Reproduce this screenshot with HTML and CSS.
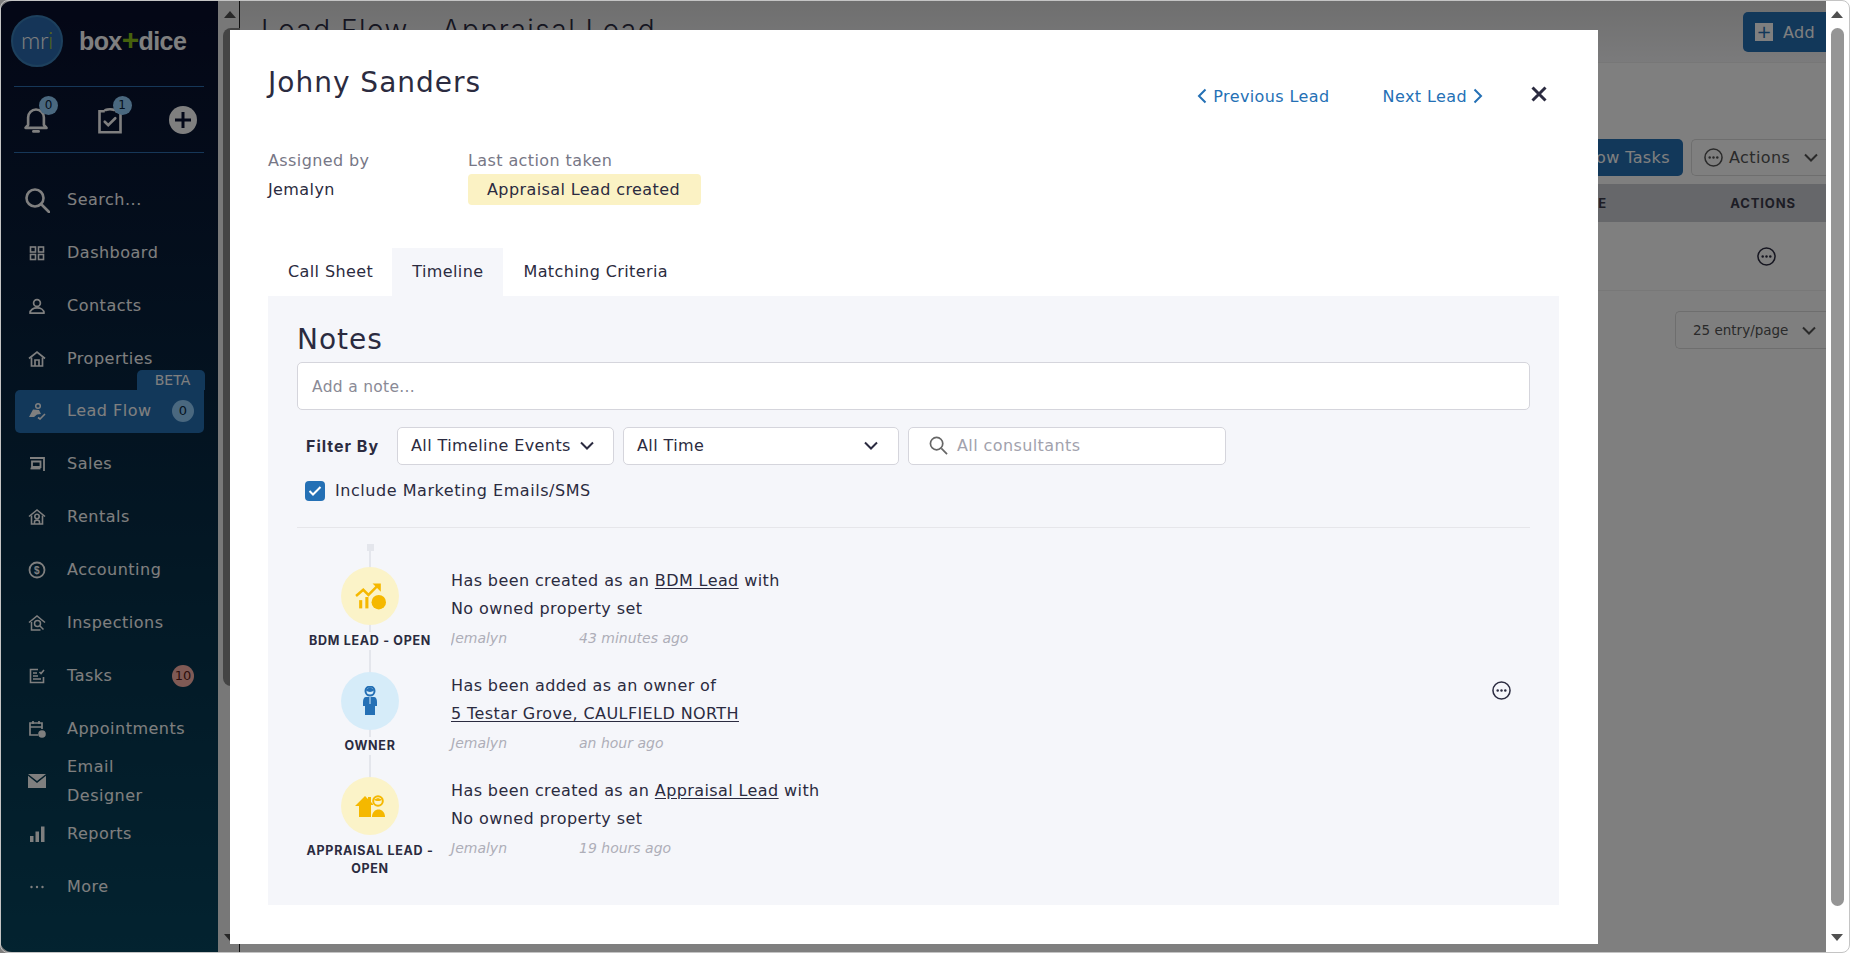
FILE: index.html
```html
<!DOCTYPE html>
<html lang="en">
<head>
<meta charset="utf-8">
<title>Lead Flow - Appraisal Lead</title>
<link rel="stylesheet" href="styles.css">
</head>
<body>
<div class="app">
  <aside class="sidebar">
    <div class="brand">
      <div class="brand-mark"><span class="mr">mr</span><span class="mi">i</span></div>
      <div class="brand-name">box<span class="plus">+</span>dice</div>
    </div>
    <div class="quick">
      <div class="quick-item">
        <svg class="qi" viewBox="0 0 32 32" fill="none" stroke="currentColor" stroke-width="3"><path d="M4 25h24l-3-3.500V13a9 9 0 0 0-18 0v8.500z" stroke-linejoin="round"/><path d="M13 29h6" stroke-linecap="round"/></svg>
        <span class="qbadge">0</span>
      </div>
      <div class="quick-item">
        <svg class="qi" viewBox="0 0 32 32" fill="none" stroke="currentColor" stroke-width="3"><path d="M10 6H4v24h24V6h-6"/><path d="M10 6c0-3 12-3 12 0"/><path d="M10 18l4 4 8-8" stroke-linecap="round"/></svg>
        <span class="qbadge">1</span>
      </div>
      <div class="quick-item">
        <svg class="qplus" viewBox="0 0 28 28"><circle cx="14" cy="14" r="14" fill="currentColor"/><path d="M14 6v16M6 14h16" stroke="#081030" stroke-width="3"/></svg>
      </div>
    </div>
    <nav class="nav">
      <a class="nav-item search"><svg class="nav-icon big" viewBox="0 0 26 26" fill="none" stroke="currentColor" stroke-width="2.600"><circle cx="11" cy="11" r="8.500"/><path d="M17 17l8 8" stroke-linecap="round"/></svg><span>Search...</span></a>
      <a class="nav-item"><svg class="nav-icon small" viewBox="0 0 16 16" fill="none" stroke="currentColor" stroke-width="1.600"><rect x="1.500" y="2" width="5" height="5"/><rect x="9.500" y="2" width="5" height="5"/><rect x="1.500" y="9.500" width="5" height="5"/><rect x="9.500" y="9.500" width="5" height="5"/></svg><span>Dashboard</span></a>
      <a class="nav-item"><svg class="nav-icon small" viewBox="0 0 16 16" fill="none" stroke="currentColor" stroke-width="1.700"><circle cx="8" cy="5" r="3.400"/><path d="M1 15.200c0-7 14-7 14 0z" stroke-linejoin="round"/></svg><span>Contacts</span></a>
      <a class="nav-item"><svg class="nav-icon" viewBox="0 0 18 18" fill="none" stroke="currentColor" stroke-width="1.700"><path d="M1 8.500L9 2l8 6.500"/><path d="M3.500 7.500V16h11V7.500"/><path d="M7 16v-6h4v6"/></svg><span>Properties</span></a>
      <div class="lead-wrap">
        <span class="beta">BETA</span>
        <a class="nav-item active"><svg class="nav-icon" viewBox="0 0 18 18" fill="currentColor"><circle cx="10" cy="4" r="2.300" fill="none" stroke="currentColor" stroke-width="1.500"/><path d="M5 7.500l6 .5 2 4-4 .5L6 15H1z"/><path d="M10 15.500l2 1.500 5-5" fill="none" stroke="currentColor" stroke-width="1.600"/></svg><span>Lead Flow</span><b class="count">0</b></a>
      </div>
      <a class="nav-item"><svg class="nav-icon small" viewBox="0 0 16 16" fill="none" stroke="currentColor" stroke-width="1.800"><path d="M1 2h14v13"/><path d="M3 5.500h8.500V11H3z"/><path d="M1.500 12.500h10"/></svg><span>Sales</span></a>
      <a class="nav-item"><svg class="nav-icon" viewBox="0 0 18 18" fill="none" stroke="currentColor" stroke-width="1.600"><path d="M1 8.500L9 2l8 6.500"/><path d="M3.500 7.500V16h11V7.500"/><circle cx="9" cy="8.500" r="2.200"/><path d="M6.500 16v-2c0-2.500 5-2.500 5 0v2"/></svg><span>Rentals</span></a>
      <a class="nav-item"><svg class="nav-icon" viewBox="0 0 18 18" fill="none"><circle cx="9" cy="9" r="7.500" stroke="currentColor" stroke-width="1.800"/><text x="9" y="12.500" class="dollar" text-anchor="middle">$</text></svg><span>Accounting</span></a>
      <a class="nav-item"><svg class="nav-icon" viewBox="0 0 18 18" fill="none" stroke="currentColor" stroke-width="1.500"><path d="M1 8.500L9 2l8 6.500"/><path d="M3.500 8V16h9"/><circle cx="9.500" cy="9.500" r="3"/><path d="M12 12l3.500 3.500"/></svg><span>Inspections</span></a>
      <a class="nav-item"><svg class="nav-icon small" viewBox="0 0 16 16" fill="none" stroke="currentColor" stroke-width="1.600"><path d="M9 1.500H1.500v13h13V9"/><path d="M4 5h4M4 8h5M4 11h8"/><path d="M10.500 4l1.500 1.500L15 2"/></svg><span>Tasks</span><b class="count alert">10</b></a>
      <a class="nav-item"><svg class="nav-icon" viewBox="0 0 18 18" fill="none" stroke="currentColor" stroke-width="1.700"><path d="M10 15H2V3h12v6"/><path d="M5 1v3M11 1v3M2 7h12"/><circle cx="14" cy="14" r="3.800" fill="currentColor" stroke="none"/></svg><span>Appointments</span></a>
      <a class="nav-item two-line"><svg class="nav-icon" viewBox="0 0 18 14"><path d="M0 0h18L9 7z" fill="currentColor"/><path d="M0 1.800V14h18V1.800L9 9z" fill="currentColor"/></svg><span>Email Designer</span></a>
      <a class="nav-item"><svg class="nav-icon small" viewBox="0 0 16 16" fill="currentColor"><rect x="1" y="10" width="3.500" height="6"/><rect x="6.500" y="5.500" width="3.500" height="10.500"/><rect x="12" y="0.500" width="3.500" height="15.500"/></svg><span>Reports</span></a>
      <a class="nav-item"><svg class="nav-icon small" viewBox="0 0 16 16" fill="currentColor"><circle cx="2.500" cy="8" r="1.200"/><circle cx="8" cy="8" r="1.200"/><circle cx="13.500" cy="8" r="1.200"/></svg><span>More</span></a>
    </nav>
  </aside>

  <div class="inner-scroll"><span class="arrow up"></span><span class="inner-thumb"></span><span class="arrow down"></span></div>

  <main class="main">
    <header class="main-head">
      <h1>Lead Flow - Appraisal Lead</h1>
      <button class="btn add"><span class="add-plus">+</span>Add</button>
    </header>
    <div class="toolbar">
      <button class="btn flow">Show Tasks</button>
      <button class="btn ghost"><svg class="dots" viewBox="0 0 20 20"><circle cx="10" cy="10" r="9" fill="none" stroke="currentColor" stroke-width="1.600"/><circle cx="6" cy="10" r="1.300" fill="currentColor"/><circle cx="10" cy="10" r="1.300" fill="currentColor"/><circle cx="14" cy="10" r="1.300" fill="currentColor"/></svg>Actions<svg class="chev" viewBox="0 0 14 8" fill="none" stroke="currentColor" stroke-width="2"><path d="M1 1l6 6 6-6"/></svg></button>
    </div>
    <div class="table-head"><span>DATE</span><span>ACTIONS</span></div>
    <div class="table-row"><svg class="dots row-dots" viewBox="0 0 20 20"><circle cx="10" cy="10" r="9" fill="none" stroke="currentColor" stroke-width="1.600"/><circle cx="6" cy="10" r="1.300" fill="currentColor"/><circle cx="10" cy="10" r="1.300" fill="currentColor"/><circle cx="14" cy="10" r="1.300" fill="currentColor"/></svg></div>
    <div class="pager"><button class="btn ghost per-page">25 entry/page<svg class="chev" viewBox="0 0 14 8" fill="none" stroke="currentColor" stroke-width="2"><path d="M1 1l6 6 6-6"/></svg></button></div>
  </main>
</div>

<div class="page-scroll"><span class="arrow up dark"></span><span class="page-thumb"></span><span class="arrow down dark"></span></div>
<div class="dim"></div>

<section class="modal">
  <div class="modal-top">
    <h2>Johny Sanders</h2>
    <div class="lead-nav">
      <a class="lead-link"><svg class="pn" viewBox="0 0 10 16" fill="none" stroke="currentColor" stroke-width="2"><path d="M8.500 1.500L2 8l6.500 6.500"/></svg>Previous Lead</a>
      <a class="lead-link next">Next Lead<svg class="pn" viewBox="0 0 10 16" fill="none" stroke="currentColor" stroke-width="2"><path d="M1.500 1.500L8 8l-6.500 6.500"/></svg></a>
      <svg class="close" viewBox="0 0 16 16" fill="none" stroke="currentColor" stroke-width="3"><path d="M1.500 1.500l13 13M14.500 1.500l-13 13"/></svg>
    </div>
  </div>
  <div class="meta-row">
    <div class="meta-assigned"><div class="meta-label">Assigned by</div><div class="meta-value">Jemalyn</div></div>
    <div><div class="meta-label">Last action taken</div><div class="tag">Appraisal Lead created</div></div>
  </div>
  <div class="tabs">
    <a class="tab first">Call Sheet</a>
    <a class="tab current">Timeline</a>
    <a class="tab">Matching Criteria</a>
  </div>
  <div class="panel">
    <h3>Notes</h3>
    <div class="note-input">Add a note...</div>
    <div class="filters">
      <strong class="filter-label">Filter By</strong>
      <div class="field events">All Timeline Events<svg class="chev" viewBox="0 0 14 8" fill="none" stroke="currentColor" stroke-width="2"><path d="M1 1l6 6 6-6"/></svg></div>
      <div class="field period">All Time<svg class="chev" viewBox="0 0 14 8" fill="none" stroke="currentColor" stroke-width="2"><path d="M1 1l6 6 6-6"/></svg></div>
      <div class="field people"><svg class="mag" viewBox="0 0 20 20" fill="none" stroke="currentColor" stroke-width="1.800"><circle cx="8" cy="8" r="6.500"/><path d="M13 13l6 6"/></svg><span>All consultants</span></div>
    </div>
    <label class="check-row"><span class="check"><svg viewBox="0 0 14 12" fill="none" stroke="#fff" stroke-width="2"><path d="M1.500 6l3.500 3.500L12.500 2"/></svg></span>Include Marketing Emails/SMS</label>
    <div class="timeline">
      <span class="tl-cap"></span>
      <article class="event">
        <div class="event-side">
          <div class="badge yellow"><svg class="ic-bdm" viewBox="0 0 30 26" fill="#f5b800"><path d="M1 13l7-6 5 5 8-8" fill="none" stroke="#f5b800" stroke-width="2.400"/><path d="M17 1h8v8z"/><rect x="4" y="17" width="3" height="8"/><rect x="10" y="14" width="3" height="11"/><circle cx="23" cy="19" r="7"/></svg></div>
          <div class="event-type">BDM LEAD - OPEN</div>
        </div>
        <div class="event-body">
          <p>Has been created as an <u>BDM Lead</u> with</p>
          <p>No owned property set</p>
          <div class="event-meta"><span class="who"><span class="clip">Jemalyn</span></span><span class="when">43 minutes ago</span></div>
        </div>
      </article>
      <article class="event">
        <div class="event-side">
          <div class="badge blue"><svg class="ic-owner" viewBox="0 0 16 30" fill="#2470b5"><circle cx="8" cy="5" r="4.500" fill="none" stroke="#2470b5" stroke-width="2"/><path d="M3.500 4c3 2.500 6 2.500 9 0L8 1z"/><path d="M4 11h8c2 0 3 2 3 5v4h-2v9H3v-9H1v-4c0-3 1-5 3-5z"/><path d="M7.500 11h1v7h-1z" fill="#d6ecf9"/></svg></div>
          <div class="event-type">OWNER</div>
        </div>
        <div class="event-body">
          <p>Has been added as an owner of</p>
          <p><u>5 Testar Grove, CAULFIELD NORTH</u></p>
          <div class="event-meta"><span class="who">Jemalyn</span><span class="when">an hour ago</span></div>
        </div>
        <svg class="dots event-dots" viewBox="0 0 20 20"><circle cx="10" cy="10" r="9" fill="none" stroke="currentColor" stroke-width="1.600"/><circle cx="6" cy="10" r="1.300" fill="currentColor"/><circle cx="10" cy="10" r="1.300" fill="currentColor"/><circle cx="14" cy="10" r="1.300" fill="currentColor"/></svg>
      </article>
      <article class="event">
        <div class="event-side">
          <div class="badge yellow"><svg class="ic-appraisal" viewBox="0 0 30 24" fill="#f5b800"><path d="M0 12L10 2l3 3V3h3v5l2 2v1h-2v12H4V12z"/><circle cx="23" cy="7" r="4.800" fill="none" stroke="#f5b800" stroke-width="2"/><path d="M19 5.500c2 2 6 2 8 0L23 4z"/><path d="M17 23c0-10 13-10 13 0z"/></svg></div>
          <div class="event-type">APPRAISAL LEAD - OPEN</div>
        </div>
        <div class="event-body">
          <p>Has been created as an <u>Appraisal Lead</u> with</p>
          <p>No owned property set</p>
          <div class="event-meta"><span class="who">Jemalyn</span><span class="when">19 hours ago</span></div>
        </div>
      </article>
    </div>
  </div>
</section>
</body>
</html>
```

FILE: styles.css
```css
* { box-sizing: border-box; }
html, body { margin: 0; height: 100%; overflow: hidden; }
body { font-family: "DejaVu Sans", "Inter", sans-serif; font-size: 16px; letter-spacing: .4px; color: #2b2b40; background: #fff; position: relative; }
body::after { content: ""; position: absolute; inset: 0; border: 1px solid #c4c4c4; border-radius: 8px; pointer-events: none; }
a { color: inherit; text-decoration: none; }
h1, h2, h3, p { margin: 0; font-weight: 400; }
button { font: inherit; letter-spacing: inherit; }

.app { display: flex; height: 953px; padding-right: 24px; }

/* sidebar */
.sidebar { width: 218px; flex: none; background: linear-gradient(180deg, #080e2c 0%, #07304a 60%, #064660 100%); color: #fff; padding: 12px 14px 0; border-radius: 12px 0 0 12px; margin: 1px 0; }
.brand { display: flex; align-items: center; height: 56px; gap: 16px; }
.brand-mark { width: 52px; height: 52px; border-radius: 50%; background: #2a6bb0; border: 2px solid #3b80bb; display: flex; align-items: center; justify-content: center; font-size: 24px; color: #fff; flex: none; letter-spacing: -.4px; margin-left: -3px; font-family: "Lato", sans-serif; font-weight: 300; padding-bottom: 3px; }
.mi { color: #a4c639; }
.brand-name { font-family: "Liberation Sans", sans-serif; font-weight: 700; font-size: 25px; letter-spacing: -.6px; color: #fff; }
.plus { color: #8cc21a; font-size: 30px; line-height: 20px; }
.quick { margin-top: 17px; height: 67px; border-top: 1px solid #2c6fb0; border-bottom: 1px solid #2c6fb0; display: flex; align-items: center; justify-content: space-between; padding: 0 7px 0 8px; }
.quick-item { position: relative; width: 28px; height: 30px; display: flex; align-items: center; justify-content: center; }
.qi { width: 28px; height: 28px; }
.qplus { width: 28px; height: 28px; color: #fff; }
.qbadge { position: absolute; left: 17px; top: -9px; width: 19px; height: 19px; border-radius: 50%; background: #94d0ff; color: #082038; font-size: 12px; letter-spacing: 0; line-height: 19px; text-align: center; }
.nav { margin-top: 20px; display: flex; flex-direction: column; }
.nav-item { height: 53px; display: flex; align-items: center; padding: 0 11px 0 3px; margin: 0 -1px; font-size: 16px; letter-spacing: .5px; line-height: 29px; color: #fff; }
.nav-item span { margin-left: 21px; white-space: nowrap; }
.nav-icon { width: 18px; height: 18px; margin-left: 12px; flex: none; }
.nav-icon.small { width: 16px; height: 16px; margin-left: 13px; margin-right: 1px; }
.nav-icon.big { width: 26px; height: 26px; margin-left: 8px; margin-right: -4px; }
.dollar { font: 700 10px "Liberation Sans", sans-serif; fill: currentColor; }
.two-line { height: 52px; }
.two-line span { width: 100px; white-space: normal; }
.lead-wrap { position: relative; height: 52px; display: flex; align-items: center; }
.beta { position: absolute; right: -1px; top: -15px; width: 68px; height: 20px; background: #2470b5; border-radius: 5px 5px 0 0; font-size: 14px; letter-spacing: 0; line-height: 20px; text-align: center; color: #fff; padding-left: 3px; }
.nav-item.active { width: 189px; height: 43px; background: #2470b5; border-radius: 5px 0 5px 5px; position: relative; margin: 0 -1px 0 1px; padding: 0 10px 1px 1px; }
.count { margin-left: auto; width: 22px; height: 22px; border-radius: 50%; background: #94d0ff; font-weight: 400; font-size: 13px; letter-spacing: 0; line-height: 22px; text-align: center; color: #0a2a44; flex: none; }
.count.alert { background: #ffb4aa; color: #5a1d18; }

/* inner scrollbar */
.inner-scroll { width: 22px; flex: none; background: #f1f1f1; border-right: 1px solid #222; position: relative; padding: 28px 0 0 5px; }
.inner-thumb { display: block; width: 17px; height: 658px; background: #888; border-radius: 8px 0 0 8px; }
.arrow { position: absolute; left: 6px; width: 0; height: 0; border-left: 6px solid transparent; border-right: 6px solid transparent; }
.arrow.up { top: 11px; border-bottom: 7px solid #505050; }
.arrow.down { bottom: 12px; border-top: 7px solid #505050; }

/* background page */
.main { flex: 1; min-width: 0; background: #fff; overflow: hidden; }
.main-head { height: 63px; background: linear-gradient(180deg, #ddd, #f6f6f8); display: flex; justify-content: space-between; border-bottom: 1px solid #eee; padding: 12px 0 0 21px; }
.main-head h1 { font-size: 28px; line-height: 40px; color: #2b2b40; margin-top: -2px; font-family: "Inter", sans-serif; letter-spacing: 1.500px; font-weight: 300; }
.btn { border: 0; background: #2470b5; color: #fff; border-radius: 5px 0 0 5px; height: 40px; font-size: 16px; }
.add { width: 83px; display: flex; align-items: center; padding: 0 0 0 12px; gap: 10px; }
.add-plus { width: 18px; height: 18px; background: #fff; color: #2470b5; font-size: 18px; letter-spacing: 0; line-height: 17px; text-align: center; }
.toolbar { padding-top: 76px; height: 122px; display: flex; justify-content: flex-end; gap: 8px; }
.flow { width: 200px; height: 37px; border-radius: 5px; text-align: right; padding-right: 13px; }
.ghost { background: #fff; color: #555; border: 1px solid #ddd; }
.toolbar .ghost { width: 135px; height: 37px; display: flex; align-items: center; padding: 0 0 0 12px; border-right: 0; white-space: nowrap; overflow: hidden; }
.dots { width: 19px; height: 19px; color: #2b2b40; flex: none; }
.toolbar .dots { color: #555; margin-right: 6px; }
.toolbar .chev { margin-left: 14px; }
.chev { width: 14px; height: 9px; flex: none; }
.table-head { height: 38px; background: #ccced4; margin-top: -1px; display: flex; justify-content: flex-end; gap: 123px; padding-right: 30px; font-family: "Inter", sans-serif; font-size: 13px; font-weight: 700; letter-spacing: .9px; line-height: 38px; color: #3a3a4a; }
.table-row { height: 69px; border-bottom: 1px solid #f1f1f1; display: flex; justify-content: flex-end; align-items: center; padding-right: 50px; }
.pager { display: flex; justify-content: flex-end; padding-top: 20px; }
.per-page { width: 151px; height: 38px; display: flex; align-items: center; padding: 0 0 0 17px; font-size: 13.500px; letter-spacing: 0; gap: 14px; border-right: 0; white-space: nowrap; }

/* right scrollbar and dim */
.page-scroll { position: absolute; right: 0; top: 0; bottom: 0; width: 24px; background: #fff; padding: 28px 0 0 5px; }
.page-thumb { display: block; width: 13px; height: 878px; background: #959595; border-radius: 7px; }
.page-scroll .arrow { left: 5px; }
.dim { position: absolute; left: 0; top: 0; bottom: 0; right: 24px; background: rgba(0, 0, 0, .5); }

/* modal */
.modal { position: absolute; left: 230px; top: 30px; width: 1368px; height: 914px; background: #fff; padding: 0 38px; }
.modal-top { display: flex; justify-content: space-between; height: 110px; }
.modal-top h2 { font-size: 28px; letter-spacing: 1px; line-height: 32px; padding-top: 37px; color: #2b2b40; }
.lead-nav { display: flex; align-items: center; height: 20px; margin-top: 56px; padding-right: 13px; color: #2470b5; }
.lead-link { display: flex; align-items: center; gap: 6px; }
.lead-link.next { margin-left: 53px; }
.pn { width: 10px; height: 16px; }
.close { width: 16px; height: 16px; color: #2b2b40; margin-left: 48px; margin-top: -4px; }
.meta-row { display: flex; padding-top: 11px; }
.meta-assigned { width: 200px; }
.meta-label { line-height: 20px; color: #777786; }
.meta-value { line-height: 31px; margin-top: 3px; }
.tag { line-height: 31px; height: 31px; background: #fbf2c4; border-radius: 4px; padding: 0 19px; margin-top: 3px; width: 233px; white-space: nowrap; }
.tabs { display: flex; margin-top: 43px; height: 48px; }
.tab { padding: 0 20px; line-height: 48px; }
.tab.first { padding-right: 19px; }
.tab.current { background: #f5f6fa; }
.panel { background: #f5f6fa; width: 1291px; height: 609px; padding: 25px 29px 0; }
.panel h3 { font-size: 28px; letter-spacing: 1px; line-height: 38px; color: #2b2b40; }
.note-input { margin-top: 3px; width: 1233px; height: 48px; border: 1px solid #d5d5dc; border-radius: 5px; background: #fff; padding: 0 14px; font-size: 15.500px; letter-spacing: .3px; line-height: 49px; color: #8a8a96; }
.filters { display: flex; align-items: center; height: 38px; margin-top: 17px; padding-left: 9px; gap: 9px; }
.filter-label { font-weight: 700; font-family: "Inter", sans-serif; font-size: 16px; letter-spacing: 1px; width: 82px; flex: none; white-space: nowrap; padding-bottom: 1px; }
.field { height: 38px; border: 1px solid #d5d5dc; border-radius: 5px; background: #fff; display: flex; align-items: center; justify-content: space-between; padding: 0 13px 1px; flex: none; white-space: nowrap; }
.events { width: 217px; padding-right: 19px; }
.events .chev { margin-left: 8px; }
.period { width: 276px; padding-right: 20px; }
.people { width: 318px; justify-content: flex-start; gap: 9px; padding-left: 20px; color: #a2a2ad; }
.mag { width: 19px; height: 19px; color: #666; }
.check-row { display: flex; align-items: center; gap: 10px; margin: 16px 0 0 8px; line-height: 20px; letter-spacing: .55px; }
.check { width: 20px; height: 20px; background: #2470b5; border-radius: 4px; display: flex; align-items: center; justify-content: center; }
.check svg { width: 14px; height: 12px; }
.timeline { position: relative; margin-top: 26px; width: 1233px; border-top: 1px solid #e6e6ea; padding-top: 39px; }
.timeline::before { content: ""; position: absolute; left: 72px; top: 18px; bottom: 60px; width: 2px; background: #e4e6ec; }
.tl-cap { position: absolute; left: 70px; top: 16px; width: 7px; height: 7px; background: #e4e6ec; }
.event { display: flex; height: 105px; position: relative; }
.event-side { width: 128px; margin-left: 9px; flex: none; text-align: center; }
.badge { width: 58px; height: 58px; border-radius: 50%; margin: 0 auto; display: flex; align-items: center; justify-content: center; position: relative; }
.badge.yellow { background: #fbf3c8; }
.badge.blue { background: #d6ecf9; }
.ic-bdm { width: 31px; height: 28px; }
.ic-owner { width: 16px; height: 30px; }
.ic-appraisal { width: 30px; height: 24px; }
.event-type { position: relative; font-family: "Inter", sans-serif; font-size: 12.500px; letter-spacing: .7px; font-weight: 700; line-height: 18px; margin-top: 7px; background: #f5f6fa; color: #2b2b40; }
.event-body { margin-left: 17px; line-height: 28px; }
.event-body u { text-underline-offset: 2px; }
.event-meta { display: flex; font-size: 14px; letter-spacing: 0; font-style: italic; color: #aeaeb8; line-height: 18px; margin-top: 6px; }
.who { width: 128px; }
.clip { display: inline-block; width: 59px; overflow: hidden; vertical-align: bottom; }
.event-dots { position: absolute; right: 19px; top: 9px; }
```
